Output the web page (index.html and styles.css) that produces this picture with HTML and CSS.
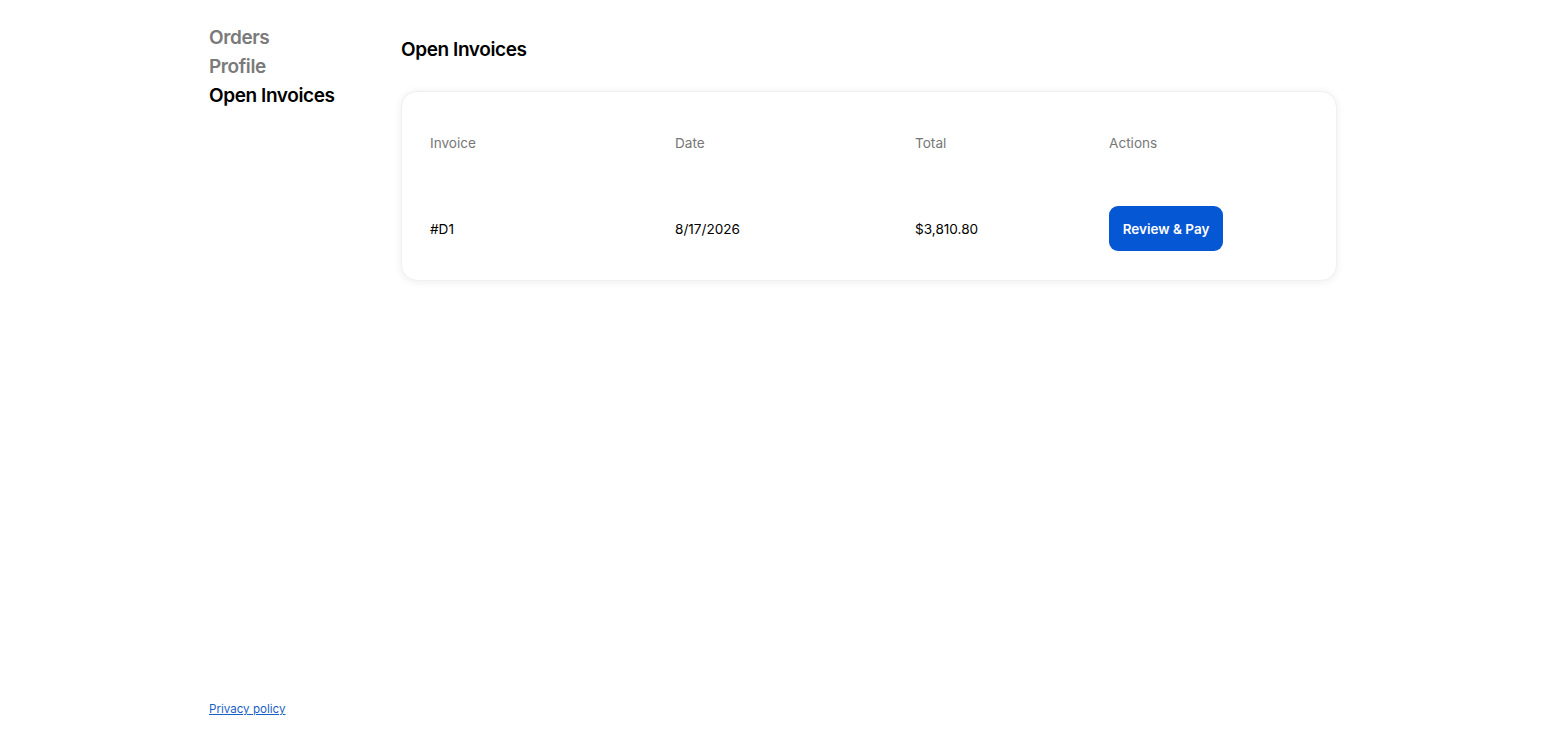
FILE: index.html
```html
<!DOCTYPE html>
<html lang="en">
<head>
    <meta charset="UTF-8">
    <meta name="viewport" content="width=device-width, initial-scale=1.0">
    <title>Open Invoices</title>
    <link rel="stylesheet" href="styles.css">
</head>
<body>
    <div class="page">
        <div class="layout">
            <nav class="sidebar">
                <a class="nav-link" href="#">Orders</a>
                <a class="nav-link" href="#">Profile</a>
                <a class="nav-link active" href="#">Open Invoices</a>
            </nav>

            <main class="content">
                <h1 class="title">Open Invoices</h1>
                <div class="card">
                    <div class="invoice-table">
                        <div class="cell head">Invoice</div>
                        <div class="cell head">Date</div>
                        <div class="cell head">Total</div>
                        <div class="cell head">Actions</div>

                        <div class="cell">#D1</div>
                        <div class="cell">8/17/2026</div>
                        <div class="cell">$3,810.80</div>
                        <div class="cell"><button class="pay-btn">Review &amp; Pay</button></div>
                    </div>
                </div>
            </main>
        </div>

        <footer class="footer">
            <a href="#" class="privacy">Privacy policy</a>
        </footer>
    </div>
</body>
</html>
```

FILE: styles.css
```css
* {
    box-sizing: border-box;
}

body {
    margin: 0;
    font-family: Inter, "Noto Sans", sans-serif;
    color: #000;
    background-color: #fff;
}

.page {
    width: 1128px;
    margin: 0 auto;
    min-height: 100vh;
    display: flex;
    flex-direction: column;
}

.layout {
    display: flex;
    flex: 1;
}

.sidebar {
    width: 192px;
    display: flex;
    flex-direction: column;
    padding-top: 23px;
}

.nav-link {
    font-size: 19px;
    font-weight: 600;
    line-height: 29px;
    color: #7a7a7a;
    text-decoration: none;
    letter-spacing: -0.4px;
}

.nav-link.active {
    color: #000;
}

.content {
    flex: 1;
}

.title {
    font-size: 19px;
    font-weight: 600;
    margin: 37px 0 28px;
    line-height: 26px;
    letter-spacing: -0.4px;
}

.card {
    background: #fff;
    border: 1px solid #f0f0f0;
    border-radius: 16px;
    box-shadow: 0 1px 8px rgba(0, 0, 0, 0.07);
    padding: 28px 28px 29px;
}

.invoice-table {
    display: grid;
    grid-template-columns: 245px 240px 194px 1fr;
    row-gap: 40px;
    align-items: center;
}

.cell {
    font-size: 13.6px;
    line-height: 18px;
}

.cell.head {
    color: #777;
    padding: 14px 0;
}

.pay-btn {
    font-family: Inter, "Noto Sans", sans-serif;
    background-color: #0657d4;
    color: #fff;
    font-size: 13.5px;
    font-weight: 600;
    border: none;
    border-radius: 9px;
    height: 45px;
    width: 114px;
    cursor: pointer;
}

.footer {
    padding-bottom: 18px;
}

.privacy {
    font-size: 11.6px;
    color: #1a5fc7;
}
```
